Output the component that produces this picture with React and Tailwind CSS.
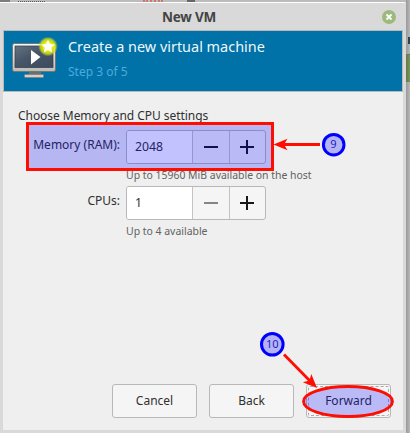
import React from "react";

function VmIcon() {
  return (
    <svg width="48" height="48" viewBox="0 0 48 48" className="block shrink-0">
      <defs>
        <linearGradient id="bezel" x1="0" y1="0" x2="0" y2="1">
          <stop offset="0" stopColor="#f8f8f6" />
          <stop offset="1" stopColor="#b9bbb8" />
        </linearGradient>
        <linearGradient id="screen" x1="0" y1="0" x2="1" y2="1">
          <stop offset="0" stopColor="#65727f" />
          <stop offset="0.45" stopColor="#465567" />
          <stop offset="1" stopColor="#3d4a5e" />
        </linearGradient>
        <radialGradient id="glow">
          <stop offset="0.45" stopColor="#eef000" />
          <stop offset="0.75" stopColor="#d7e416" stopOpacity="0.8" />
          <stop offset="1" stopColor="#a8cc30" stopOpacity="0" />
        </radialGradient>
      </defs>
      <path d="M19 34h12v7H19z" fill="#6b6f70" />
      <rect x="14.500" y="37.500" width="19" height="3" rx="1" fill="#d0d0ce" stroke="#858784" />
      <rect x="2.500" y="6.500" width="43" height="28" rx="2" fill="url(#bezel)" stroke="#747875" />
      <rect x="5" y="9" width="38" height="21.500" fill="url(#screen)" stroke="#2f3b49" strokeWidth="0.7" />
      <path d="M21 13l9.500 7-9.500 7.500z" fill="#fff" />
      <circle cx="38" cy="9.500" r="10" fill="url(#glow)" />
      <path d="M38 2.700l2 4.400 4.700.5-3.500 3.200 1 4.700-4.200-2.400-4.200 2.400 1-4.700-3.500-3.200 4.700-.5z" fill="#fff" />
    </svg>
  );
}

function SpinBox({ value, minusDisabled }) {
  return (
    <div className="flex h-[34px] w-[140px] overflow-hidden rounded-[3px] border border-[#b8b8b8] bg-[#f5f5f5]">
      <div className="flex w-[66px] items-center border-r border-[#c4c4c4] bg-white pl-2 text-[12.25px] text-[#303030]">{value}</div>
      <div className="flex w-[37px] items-center justify-center border-r border-[#c4c4c4]">
        <div className={minusDisabled ? "h-0.5 w-3.5 bg-[#858585]" : "h-0.5 w-3.5 bg-[#171717]"} />
      </div>
      <div className="flex flex-1 items-center justify-center pr-px">
        <svg width="14" height="14" viewBox="0 0 14 14"><path d="M6 0h2v6h6v2H8v6H6V8H0V6h6z" fill="#171717" /></svg>
      </div>
    </div>
  );
}

function Button({ children, focused }) {
  return (
    <button className="h-[34px] w-[85px] rounded-[3px] border border-[#b8b8b8] bg-[#f5f5f5] p-px text-[12px] text-[#303030]">
      <span className={focused ? "flex h-full items-center justify-center rounded-[2px] border border-dashed border-[#aaa]" : "flex h-full items-center justify-center"}>
        {children}
      </span>
    </button>
  );
}

function Annotations() {
  return (
    <svg width="410" height="433" viewBox="0 0 410 433" className="pointer-events-none absolute left-0 top-0">
      <g fill="#0000ff" fillOpacity="0.24" stroke="#ff0d00" strokeWidth="3">
        <rect x="27.500" y="123.500" width="245" height="46" />
        <ellipse cx="348" cy="401.500" rx="44.500" ry="15" strokeWidth="2.800" />
      </g>
      <g fill="none" stroke="#ff0d00" strokeWidth="2.800">
        <path d="M282 144.500H320" />
        <path d="M284 354.500L311 382" />
      </g>
      <g fill="#ff0d00">
        <path d="M273.500 144.500L287.500 138.700 284 144.500 287.500 150.300z" />
        <path d="M317 388L302.800 382.300 309.500 380.500 311.300 374z" />
      </g>
      <g fill="#b4b4f4" stroke="#0000ff" strokeWidth="3">
        <circle cx="333.700" cy="144.700" r="10.300" />
        <circle cx="272.300" cy="344.300" r="10.800" />
      </g>
      <g fill="#2222c8" fontSize="11" textAnchor="middle" className="font-['Noto_Sans',sans-serif]">
        <text x="333.500" y="148">9</text>
        <text x="272.300" y="348">10</text>
      </g>
    </svg>
  );
}

export default function App() {
  return (
    <div className="relative flex h-[433px] w-[410px] overflow-hidden bg-[#b9b9b9] font-['Noto_Sans',sans-serif] text-[#303030]">
      <div className="flex w-[406px] flex-col">
        <div className="flex h-0.5 shrink-0 bg-[#bcbcbc]">
          <div className="h-0.5 w-2.5 bg-[#777d80]" />
          <div className="ml-2 h-0.5 w-[27px] border-b border-dotted border-[#555]" />
          <div className="ml-[98px] h-0.5 w-5 border-b-2 border-dotted border-[#ca7770]" />
          <div className="ml-6 h-0.5 w-2 bg-[#666]" />
        </div>
        <div className="flex min-h-0 flex-1 flex-col rounded-tr-[2px] border-t border-white bg-[#d9d9d9] px-[3px] pb-[3px]">
          <div className="flex h-[27px] shrink-0 items-center pr-[7px]">
            <div className="flex-1 pr-[7px] pt-px text-center text-[13.500px] font-bold tracking-[-0.200px] text-[#444]">New VM</div>
            <svg width="14" height="14" viewBox="0 0 14 14" className="block">
              <circle cx="7" cy="7" r="7" fill="#9cba7c" />
              <path d="M4.500 4.500l5 5M9.500 4.500l-5 5" stroke="#fff" strokeWidth="1.900" />
            </svg>
          </div>
          <div className="flex min-h-0 flex-1 flex-col bg-[#efefef]">
            <div className="flex h-[62px] shrink-0 items-start border border-[#b9b9b9] bg-[#0072a8] pl-1.5 pt-1.5">
              <VmIcon />
              <div className="ml-[10px] whitespace-nowrap">
                <div className="text-[14.450px] leading-5 text-[#eef7fb]">Create a new virtual machine</div>
                <div className="mt-[5px] text-[12px] leading-5 text-[#4daade]">Step 3 of 5</div>
              </div>
            </div>
            <div className="flex flex-1 flex-col pl-[15px] pt-[14px]">
              <div className="h-[24px] whitespace-nowrap text-[12px] leading-5 tracking-[-0.050px]">Choose Memory and CPU settings</div>
              <div className="grid grid-cols-[102px_1fr] gap-x-[6px]">
                <div className="whitespace-nowrap pt-[5px] text-right text-[12px] leading-5">Memory (RAM):</div>
                <SpinBox value="2048" />
                <div />
                <div className="h-[22px] whitespace-nowrap pt-[3px] text-[10.450px] leading-4 text-[#626262]">Up to 15960 MiB available on the host</div>
                <div className="pt-[5px] text-right text-[12px] leading-5">CPUs:</div>
                <SpinBox value="1" minusDisabled />
                <div />
                <div className="h-[22px] whitespace-nowrap pt-[3px] text-[10.450px] leading-4 text-[#626262]">Up to 4 available</div>
              </div>
            </div>
            <div className="flex shrink-0 justify-end gap-3 pb-3 pr-3">
              <Button>Cancel</Button>
              <Button>Back</Button>
              <Button focused>Forward</Button>
            </div>
          </div>
        </div>
      </div>
      <div className="flex w-1 flex-col bg-gradient-to-r from-[#999] to-[#b8b8b8]">
        <div className="mt-[37px] h-[7px] w-1 border-l-2 border-[#a5a5a5] bg-[#35424c]" />
        <div className="mt-[10px] h-[28px] w-1 border-t border-[#727272] bg-gradient-to-r from-[#617a4a] to-[#779959]" />
      </div>
      <Annotations />
    </div>
  );
}
